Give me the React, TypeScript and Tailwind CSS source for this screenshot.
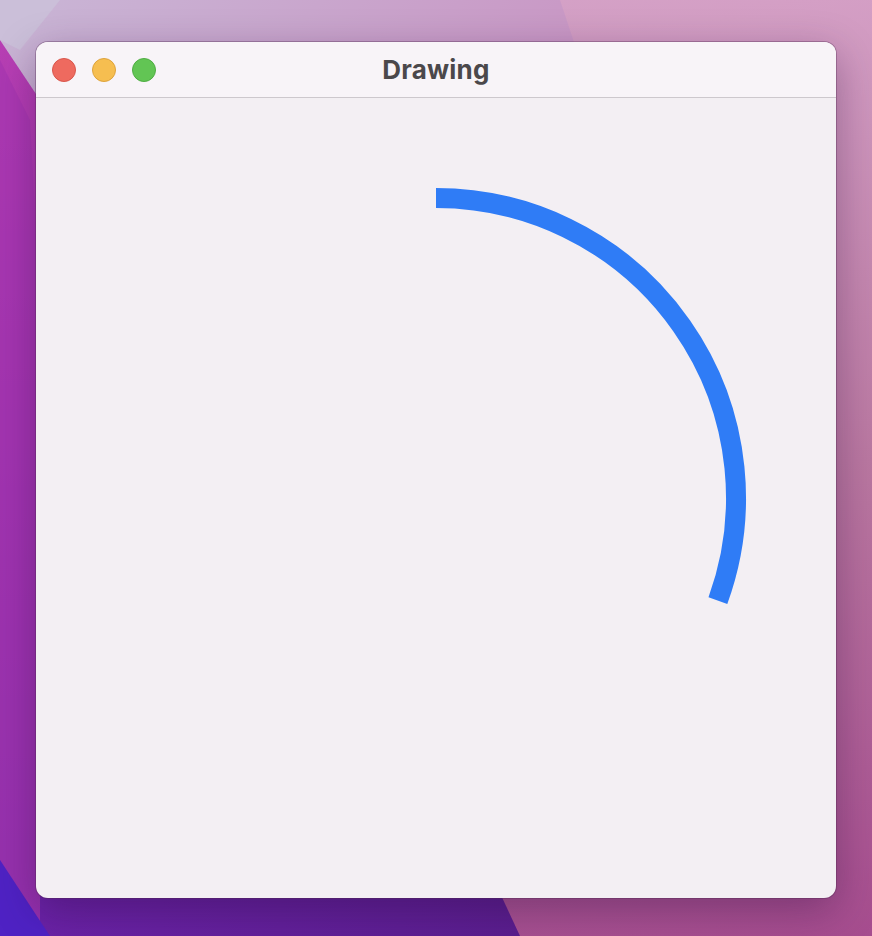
import React from "react";

const CX = 436;
const CY = 498;
const R = 300;

// point on the circle, angle in degrees (0 = right, clockwise)
const pt = (deg: number) => {
  const a = (deg * Math.PI) / 180;
  return [CX + R * Math.cos(a), CY + R * Math.sin(a)];
};

const Wallpaper: React.FC = () => (
  <svg className="absolute inset-0" width="872" height="936" viewBox="0 0 872 936">
    <defs>
      <linearGradient id="base" x1="0" y1="0" x2="1" y2="1">
        <stop offset="0" stopColor="#c9b6d6" />
        <stop offset="0.45" stopColor="#c98fc0" />
        <stop offset="1" stopColor="#b2509e" />
      </linearGradient>
      <linearGradient id="left" x1="0" y1="0" x2="0" y2="1">
        <stop offset="0" stopColor="#b83fb4" />
        <stop offset="0.5" stopColor="#9a31ae" />
        <stop offset="1" stopColor="#7a2aa8" />
      </linearGradient>
      <linearGradient id="bottom" x1="0" y1="0" x2="1" y2="0">
        <stop offset="0" stopColor="#6a22a6" />
        <stop offset="1" stopColor="#5a1e8e" />
      </linearGradient>
      <linearGradient id="right" x1="0" y1="0" x2="0" y2="1">
        <stop offset="0" stopColor="#d6a2c6" />
        <stop offset="0.5" stopColor="#b9799e" />
        <stop offset="1" stopColor="#a44c8c" />
      </linearGradient>
    </defs>
    <rect width="872" height="936" fill="url(#base)" />
    <polygon points="560,0 872,0 872,936 520,936 430,860 600,120" fill="url(#right)" opacity="0.85" />
    <polygon points="0,40 60,130 120,936 0,936" fill="url(#left)" />
    <polygon points="0,60 30,120 50,500 60,936 0,936" fill="#a535b0" opacity="0.6" />
    <polygon points="40,850 480,850 520,936 40,936" fill="url(#bottom)" />
    <polygon points="0,860 50,936 0,936" fill="#4f22c4" />
    <polygon points="0,0 60,0 20,50 0,40" fill="#cbbfd9" />
  </svg>
);

export default function App() {
  const [sx, sy] = pt(-90);
  const [ex, ey] = pt(20);

  return (
    <div className="relative w-[872px] h-[936px] overflow-hidden pt-[42px] pl-[36px]">
      <Wallpaper />
      <div className="relative w-[800px] h-[856px] rounded-[12px] overflow-hidden bg-[#f3eff3] flex flex-col shadow-[0_0_0_1px_rgba(80,40,80,0.35),0_12px_40px_rgba(40,10,60,0.35)]">
        <div className="h-[56px] bg-[#f8f4f8] border-b border-[#cdc8cd] flex items-center px-[16px] relative shrink-0">
          <div className="flex items-center gap-[16px]">
            <span className="w-[24px] h-[24px] rounded-full bg-[#ee6a5f] border border-[#d9564c]" />
            <span className="w-[24px] h-[24px] rounded-full bg-[#f6be50] border border-[#dea33c]" />
            <span className="w-[24px] h-[24px] rounded-full bg-[#62c554] border border-[#4fad43]" />
          </div>
          <div className="absolute inset-0 flex items-center justify-center pointer-events-none">
            <span className="text-[26px] font-bold text-[#4b484b] font-['Inter','Liberation_Sans',sans-serif] tracking-[0.2px]">
              Drawing
            </span>
          </div>
        </div>
        <div className="flex-1 relative">
          <svg className="absolute left-0 top-[-56px]" width="800" height="856" viewBox="36 42 800 856">
            <path
              d={`M ${sx} ${sy} A ${R} ${R} 0 0 1 ${ex} ${ey}`}
              fill="none"
              stroke="#2f7cf6"
              strokeWidth="20"
              strokeLinecap="butt"
            />
          </svg>
        </div>
      </div>
    </div>
  );
}
